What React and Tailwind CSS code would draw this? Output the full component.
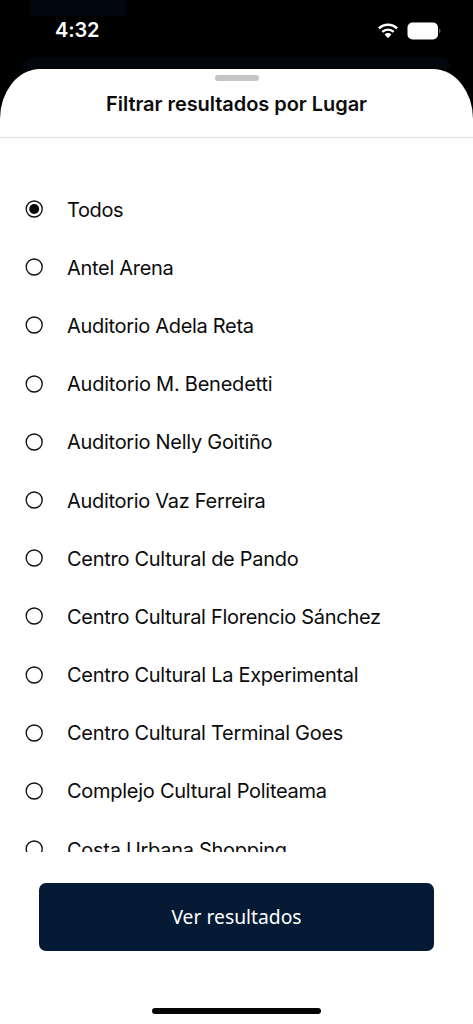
const places = [
  { name: 'Todos', tracking: 'tracking-[-0.4px]' },
  { name: 'Antel Arena', tracking: 'tracking-[-0.3px]' },
  { name: 'Auditorio Adela Reta', tracking: 'tracking-[-0.31px]' },
  { name: 'Auditorio M. Benedetti', tracking: 'tracking-[-0.23px]' },
  { name: 'Auditorio Nelly Goitiño', tracking: 'tracking-[-0.28px]' },
  { name: 'Auditorio Vaz Ferreira', tracking: 'tracking-[-0.3px]' },
  { name: 'Centro Cultural de Pando', tracking: 'tracking-[-0.28px]' },
  { name: 'Centro Cultural Florencio Sánchez', tracking: 'tracking-[-0.29px]' },
  { name: 'Centro Cultural La Experimental', tracking: 'tracking-[-0.28px]' },
  { name: 'Centro Cultural Terminal Goes', tracking: 'tracking-[-0.29px]' },
  { name: 'Complejo Cultural Politeama', tracking: 'tracking-[-0.27px]' },
  { name: 'Costa Urbana Shopping', tracking: 'tracking-[-0.29px]' },
];

function WifiIcon() {
  return (
    <svg className="h-4 w-5" viewBox="0 0 20 16" fill="none" stroke="#fff">
      <path d="M0.9 5.4C5.9 0.4 14.1 0.4 19.1 5.4" strokeWidth="2.5" />
      <path d="M4.3 8.9C7.5 5.8 12.5 5.8 15.7 8.9" strokeWidth="2.4" />
      <path d="M10 10.1C8.7 10.1 7.6 10.6 6.8 11.4Q6.6 11.7 6.9 12L9.6 14.8Q10 15.2 10.4 14.8L13.1 12Q13.4 11.7 13.2 11.4C12.4 10.6 11.3 10.1 10 10.1Z" fill="#fff" stroke="none" />
    </svg>
  );
}

function BatteryIcon() {
  return (
    <svg className="h-[18px] w-[34px]" viewBox="0 0 34 18">
      <rect x="0.5" y="0.5" width="30.5" height="17" rx="5" fill="#fff" />
      <path d="M32.2 6.4Q33.5 7.5 33.5 9T32.2 11.6Z" fill="#777" />
    </svg>
  );
}

function StatusBar() {
  return (
    <div className="relative flex h-[57px] shrink-0 justify-between pr-8 pl-[55px]">
      <div className="absolute top-0 left-[30px] h-4 w-24 bg-[#02070f]" />
      <span className="relative mt-[18px] text-[20px] leading-6 font-semibold tracking-[-0.1px] text-white">4:32</span>
      <div className="mt-[22px] flex h-[18px] items-center gap-[9px]">
        <WifiIcon />
        <BatteryIcon />
      </div>
    </div>
  );
}

function Radio({ checked }) {
  return (
    <svg className="h-[18px] w-[18px] shrink-0" viewBox="0 0 18 18">
      <circle cx="9.2" cy="9" r="8" fill="none" stroke="#111" strokeWidth="1.35" />
      {checked && <circle cx="9.2" cy="9" r="5" fill="#05080c" />}
    </svg>
  );
}

export default function App() {
  return (
    <div className="flex h-[1024px] w-[473px] flex-col overflow-hidden bg-black font-['Inter','Liberation_Sans',sans-serif] text-[#0b0b0c]">
      <StatusBar />
      <div className="mx-[22px] h-3 shrink-0 rounded-t-[22px] bg-[#02060d]" />
      <main className="flex h-[955px] shrink-0 flex-col rounded-t-[40px_50px] bg-white">
        <header className="flex h-[69px] shrink-0 flex-col items-center border-b border-[#dcdcde] pt-1.5">
          <div className="h-1.5 w-11 rounded-full bg-[#c4c5c7]" />
          <h1 className="mt-[11px] text-[20px] leading-6 font-semibold tracking-[-0.05px] whitespace-nowrap">
            Filtrar resultados por Lugar
          </h1>
        </header>
        <ul className="h-[714px] shrink-0 overflow-hidden pt-[42px]">
          {places.map((place, i) => (
            <li key={place.name} className="flex h-[58.2px] items-center pl-[25px]">
              <Radio checked={i === 0} />
              <span className={`ml-6 pt-px text-[20px] leading-6 whitespace-nowrap ${place.tracking}`}>{place.name}</span>
            </li>
          ))}
        </ul>
        <div className="flex flex-1 flex-col items-center pt-[31px]">
          <button className="h-[68px] w-[395px] rounded-[7px] bg-[#041a35] font-['Noto_Sans',sans-serif] text-[19.3px] text-white">
            Ver resultados
          </button>
          <div className="mt-auto mb-[10px] h-1.5 w-[169px] rounded-full bg-[#050705]" />
        </div>
      </main>
    </div>
  );
}
